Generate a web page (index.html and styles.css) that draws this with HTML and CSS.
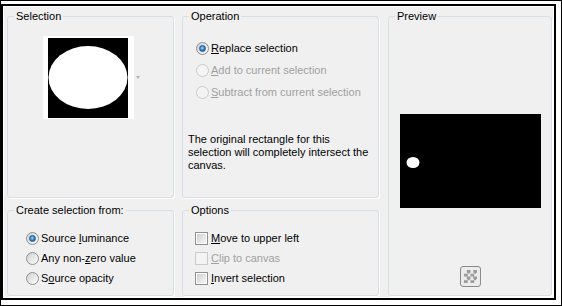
FILE: index.html
```html
<!DOCTYPE html>
<html lang="en">

<head>
    <meta charset="UTF-8">
    <meta name="viewport" content="width=device-width, initial-scale=1.0">
    <title>Selection From Mask</title>
    <link rel="stylesheet" href="styles.css">
</head>

<body>

    <div class="shot">
        <div class="frame">
            <div class="dialog">

                <!-- Selection thumbnail -->
                <fieldset class="group">
                    <legend>Selection</legend>
                    <div class="thumb-row">
                        <div class="thumb">
                            <svg width="80" height="80" viewBox="0 0 80 80">
                                <rect width="80" height="80" fill="#000"/>
                                <ellipse cx="40" cy="39.5" rx="39.5" ry="31.5" fill="#fff"/>
                            </svg>
                        </div>
                        <span class="drop-arrow"></span>
                    </div>
                </fieldset>

                <!-- Operation -->
                <fieldset class="group">
                    <legend>Operation</legend>
                    <div class="op-list">
                        <div class="opt"><span class="radio on"></span><span><u>R</u>eplace selection</span></div>
                        <div class="opt off"><span class="radio"></span><span><u>A</u>dd to current selection</span></div>
                        <div class="opt off"><span class="radio"></span><span><u>S</u>ubtract from current selection</span></div>
                    </div>
                    <p class="note">The original rectangle for this selection will completely intersect the canvas.</p>
                </fieldset>

                <!-- Preview -->
                <fieldset class="group preview">
                    <legend>Preview</legend>
                    <div class="preview-box">
                        <svg width="141" height="94" viewBox="0 0 141 94">
                            <rect width="141" height="94" fill="#000"/>
                            <ellipse cx="13" cy="48.5" rx="6.5" ry="5.5" fill="#fff"/>
                        </svg>
                        <span class="checker-btn"></span>
                    </div>
                </fieldset>

                <!-- Create selection from -->
                <fieldset class="group">
                    <legend>Create selection from:</legend>
                    <div class="src-list">
                        <div class="opt row20"><span class="radio on"></span><span>Source <u>l</u>uminance</span></div>
                        <div class="opt row20"><span class="radio"></span><span>Any non-<u>z</u>ero value</span></div>
                        <div class="opt row20"><span class="radio"></span><span>S<u>o</u>urce opacity</span></div>
                    </div>
                </fieldset>

                <!-- Options -->
                <fieldset class="group">
                    <legend>Options</legend>
                    <div class="chk-list">
                        <div class="opt row20"><span class="check"></span><span><u>M</u>ove to upper left</span></div>
                        <div class="opt row20 off"><span class="check"></span><span><u>C</u>lip to canvas</span></div>
                        <div class="opt row20"><span class="check"></span><span><u>I</u>nvert selection</span></div>
                    </div>
                </fieldset>

            </div>
        </div>
    </div>

</body>

</html>
```

FILE: styles.css
```css
body {
    margin: 0;
    background-color: #ffffff;
    font-family: 'Liberation Sans', Arial, sans-serif;
    font-size: 11px;
    color: #000000;
}

/* black double frame around the dialog */
.shot {
    width: 562px;
    height: 306px;
    box-sizing: border-box;
    border: 1px solid #000;
    padding: 3px 5px 5px 0;
}

.frame {
    height: 100%;
    box-sizing: border-box;
    border: 2px solid #000;
}

.dialog {
    height: 100%;
    box-sizing: border-box;
    border: 1px solid #ffffff;
    background-color: #f0f0f0;
    padding: 3px 1px 1px 3px;
    display: grid;
    grid-template-columns: 167px 197px 165px;
    grid-template-rows: 188px 92px;
    column-gap: 8px;
    row-gap: 6px;
}

/* group boxes */
.group {
    margin: 0;
    padding: 0;
    min-width: 0;
    border: 1px solid #d5dfe5;
    border-radius: 3px;
    box-shadow: 1px 1px 0 #ffffff;
}

.group legend {
    margin-left: 6px;
    padding: 0 2px;
    line-height: 13px;
}

.preview {
    grid-column: 3;
    grid-row: 1 / 3;
    margin-left: 1px;
}

/* selection thumbnail */
.thumb-row {
    display: flex;
    align-items: center;
    margin: 13px 0 0 35px;
}

.thumb {
    background-color: #ffffff;
    padding: 2px 6px 1px 5px;
    line-height: 0;
}

.drop-arrow {
    margin-left: 2px;
    width: 0;
    height: 0;
    border-left: 2.5px solid transparent;
    border-right: 2.5px solid transparent;
    border-top: 3px solid #b4b4b4;
}

/* option rows */
.opt {
    display: flex;
    align-items: center;
    height: 22px;
    white-space: nowrap;
}

.opt.row20 {
    height: 20px;
}

.opt.off {
    color: #a0a0a0;
}

.op-list {
    padding: 14px 0 0 13px;
}

.src-list {
    padding: 11px 0 0 18px;
}

.chk-list {
    padding: 11px 0 0 12px;
}

.note {
    margin: 30px 0 0 5px;
    width: 182px;
    line-height: 13px;
}

/* radio button */
.radio {
    position: relative;
    flex: none;
    width: 13px;
    height: 13px;
    margin-right: 2px;
    box-sizing: border-box;
    border: 1px solid #8e8f8f;
    border-radius: 50%;
    background: linear-gradient(135deg, #cfcfcf, #ffffff);
}

.radio.on::after {
    content: "";
    position: absolute;
    left: 2px;
    top: 2px;
    width: 7px;
    height: 7px;
    box-sizing: border-box;
    border-radius: 50%;
    border: 1px solid #29578a;
    background: radial-gradient(circle at 45% 40%, #9fdcfb, #2b7ccc 55%, #16467d);
}

.off .radio {
    border-color: #cacaca;
    background: #f4f4f4;
}

/* check box */
.check {
    flex: none;
    width: 13px;
    height: 13px;
    margin-right: 3px;
    box-sizing: border-box;
    border: 1px solid #8e8f8f;
    padding: 1px;
    background: linear-gradient(135deg, #d0d0d0, #f6f6f6) content-box, #ffffff;
}

.off .check {
    border-color: #cacaca;
    background: #f4f4f4;
}

/* preview */
.preview-box {
    display: flex;
    flex-direction: column;
    align-items: center;
    padding-top: 91px;
}

.preview-box svg {
    display: block;
}

.checker-btn {
    margin-top: 58px;
    width: 21px;
    height: 21px;
    box-sizing: border-box;
    border: 1px solid #8a8a8a;
    border-radius: 3px;
    padding: 3px;
    background: repeating-conic-gradient(#9c9c9c 0 25%, #ececec 0 50%) content-box 0 0 / 6.5px 6.5px, #ececec;
}
```
